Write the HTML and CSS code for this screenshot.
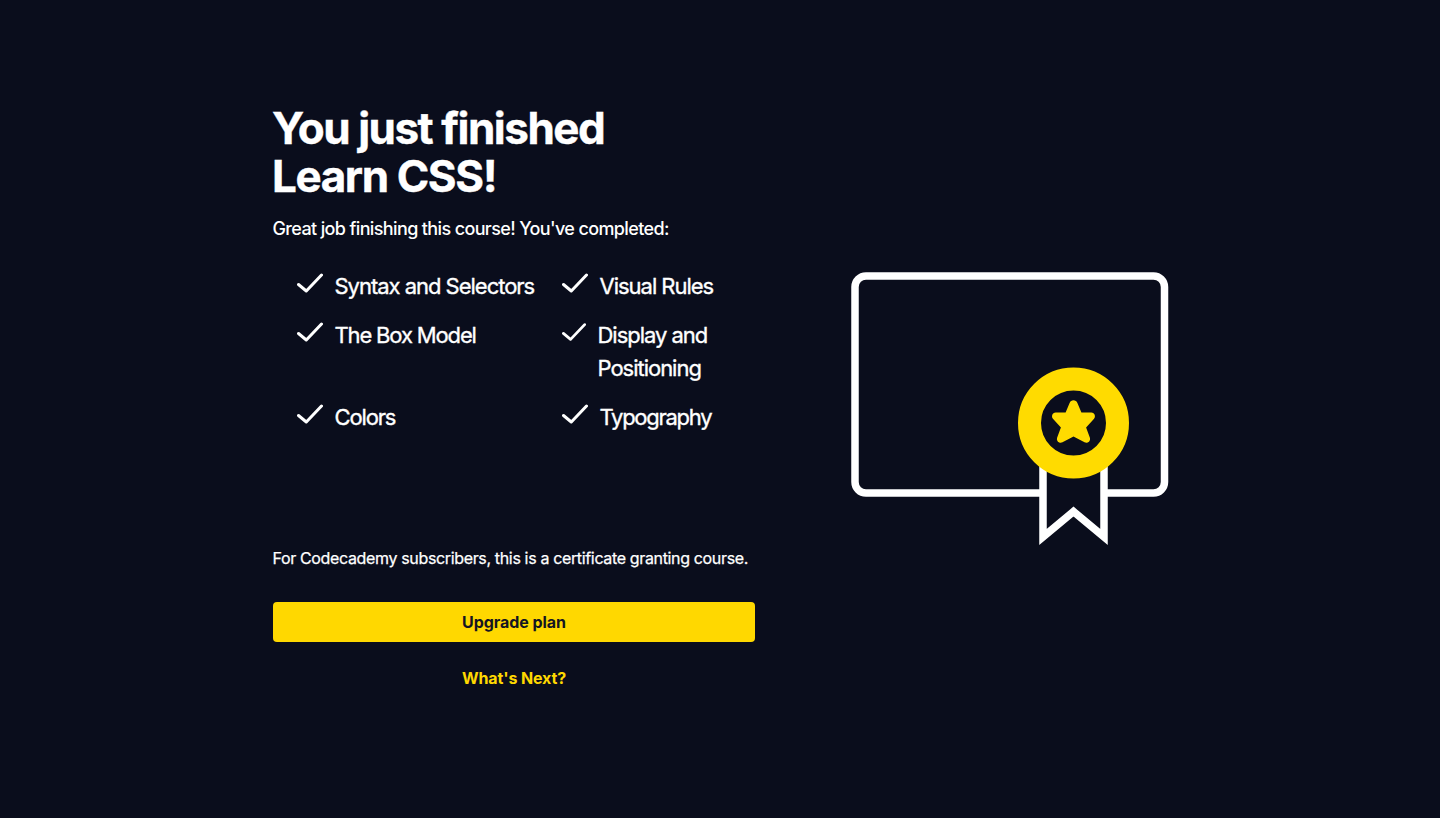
FILE: index.html
```html
<!DOCTYPE html>
<html lang="en">
<head>
<meta charset="utf-8">
<title>Course complete</title>
<link rel="stylesheet" href="styles.css">
</head>
<body>
<main class="page">
  <section class="summary">
    <h1 class="title">You just finished<br><span class="course">Learn CSS!</span></h1>
    <p class="lead">Great job finishing this course! You've completed:</p>
    <ul class="topics">
      <li class="topic"><svg class="check" viewBox="0 0 26 20"><path d="M1.5 11.5 9.300 18 24.500 2"/></svg><span>Syntax and Selectors</span></li>
      <li class="topic"><svg class="check" viewBox="0 0 26 20"><path d="M1.5 11.5 9.300 18 24.500 2"/></svg><span>Visual Rules</span></li>
      <li class="topic"><svg class="check" viewBox="0 0 26 20"><path d="M1.5 11.5 9.300 18 24.500 2"/></svg><span class="tight">The Box Model</span></li>
      <li class="topic"><svg class="check check-small" viewBox="0 0 26 20"><path d="M1.5 11.5 9.300 18 24.500 2"/></svg><span>Display and<br>Positioning</span></li>
      <li class="topic"><svg class="check" viewBox="0 0 26 20"><path d="M1.5 11.5 9.300 18 24.500 2"/></svg><span class="tight">Colors</span></li>
      <li class="topic"><svg class="check" viewBox="0 0 26 20"><path d="M1.5 11.5 9.300 18 24.500 2"/></svg><span class="tighter">Typography</span></li>
    </ul>
    <p class="note">For Codecademy subscribers, this is a certificate granting course.</p>
    <a class="button" href="#">Upgrade plan</a>
    <a class="next" href="#">What's Next?</a>
  </section>
  <svg class="certificate" viewBox="0 0 318 274">
    <rect class="frame" x="4" y="4" width="309.5" height="217" rx="11"/>
    <path class="ribbon" d="M192 180V265L222.500 239.500 253 265V180"/>
    <circle class="seal" cx="222.500" cy="151" r="44"/>
    <path class="star" d="M218.600 131C219.800 127.400 225.200 127.400 226.400 131L230.400 140.400H240.300C243.800 140.600 245.200 144.800 242.600 147.200L235.100 155.600 238.900 165.700C239.900 169.200 236.700 171.700 233.500 170.300L222.500 164.400 211.500 170.300C208.300 171.700 205.100 169.200 206.100 165.700L209.900 155.600 202.400 147.200C199.800 144.800 201.200 140.600 204.700 140.400H214.600Z"/>
  </svg>
</main>
</body>
</html>
```
FILE: styles.css
```css
* { box-sizing: border-box; }
body { margin: 0; background: #0a0d1c; color: #fff; font-family: Inter, "Liberation Sans", sans-serif; }
.page { display: flex; align-items: flex-start; gap: 96px; min-height: 818px; padding: 104px 0 0 273px; }
.summary { display: flex; flex-direction: column; width: 482px; }
.title { margin: 0 0 0 -1px; font-size: 44px; line-height: 48px; font-weight: 700; letter-spacing: -1.5px; -webkit-text-stroke: .4px #fff; }
.course { letter-spacing: -1.4px; }
.lead { margin: 15px 0 0 -.5px; font-size: 18px; line-height: 27px; font-weight: 500; letter-spacing: -.63px; white-space: nowrap; }
.topics { display: grid; grid-template-columns: 241px 1fr; column-gap: 24px; row-gap: 16px; list-style: none; margin: 28px 0 0; padding: 0 0 0 24px; }
.topic { display: flex; align-items: flex-start; gap: 11.5px; font-size: 22px; line-height: 33px; font-weight: 400; letter-spacing: -1.02px; white-space: nowrap; -webkit-text-stroke: .35px #fff; }
.tight { letter-spacing: -1.15px; }
.tighter { letter-spacing: -1.27px; }
.check { flex: none; width: 26px; height: 20px; margin-top: 3px; }
.check-small { width: 24px; }
.check path { fill: none; stroke: #fff; stroke-width: 3; stroke-linecap: round; stroke-linejoin: round; }
.note { margin: 112px 0 0 -.5px; font-size: 16px; line-height: 24px; letter-spacing: -.35px; white-space: nowrap; -webkit-text-stroke: .25px #fff; }
.button { display: block; margin-top: 32px; height: 40px; border-radius: 4px; background: #ffd800; color: #151522; font-size: 16px; line-height: 40px; font-weight: 700; letter-spacing: -.05px; text-align: center; text-decoration: none; }
.next { margin-top: 16px; color: #ffd800; font-size: 16px; line-height: 40px; font-weight: 700; letter-spacing: -.13px; text-align: center; text-decoration: none; }
.certificate { width: 318px; height: 274px; margin-top: 168px; }
.frame { fill: none; stroke: #fff; stroke-width: 7.5; }
.ribbon { fill: #0a0d1c; stroke: #fff; stroke-width: 7.5; }
.seal { fill: #0a0d1c; stroke: #ffdb00; stroke-width: 23; }
.star { fill: #ffdb00; }
```
